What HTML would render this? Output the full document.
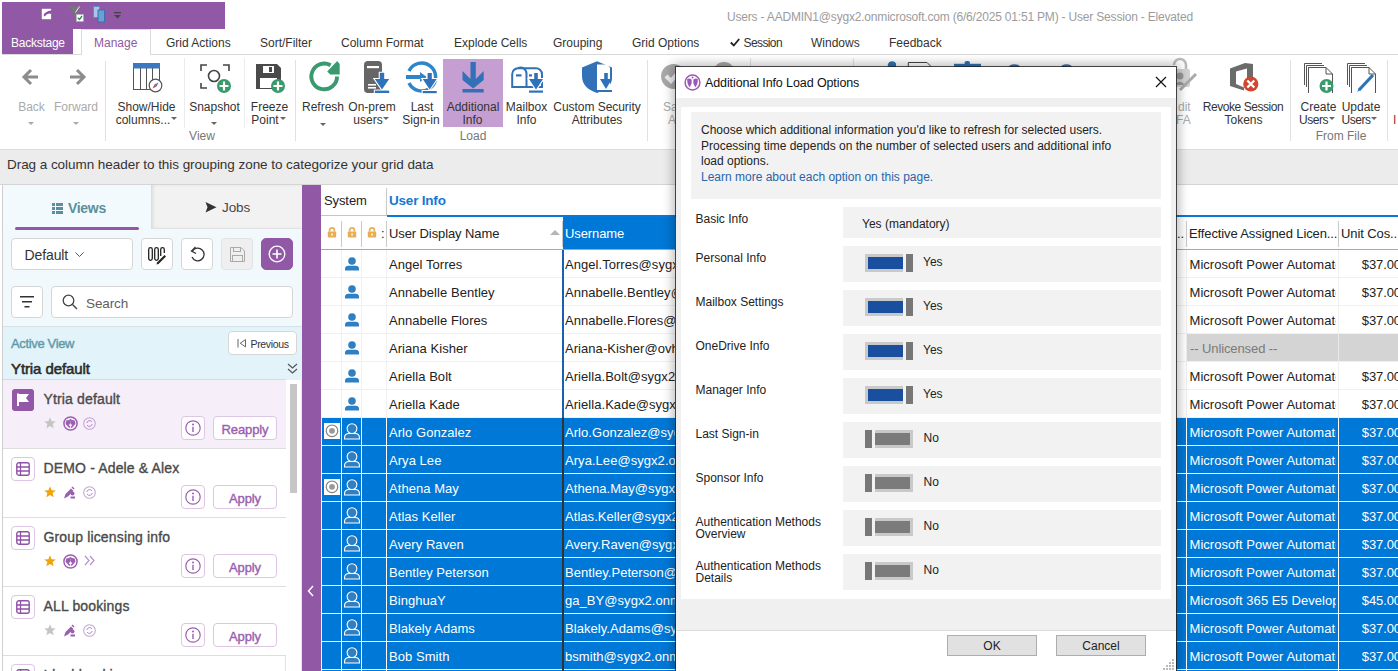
<!DOCTYPE html>
<html><head><meta charset="utf-8">
<style>
*{box-sizing:border-box;margin:0;padding:0}
html,body{width:1398px;height:671px;overflow:hidden;background:#fff;font-family:"Liberation Sans",sans-serif;color:#222;position:relative}
.a{position:absolute}
.t{position:absolute;white-space:nowrap;line-height:1}
svg{position:absolute;overflow:visible}
.clip{position:absolute;overflow:hidden}
</style></head><body>

<div class="a" style="left:2px;top:2px;width:223px;height:27px;background:#9158a5;"></div>
<svg style="left:38px;top:5px" width="18" height="18" viewBox="38 5 18 18"><rect x="41.8" y="8.8" width="9.3" height="10.4" fill="#fff"/><path d="M43.5 15 Q46 10.5 52 10.5 L51 14 Q48 12.5 44.5 16.5 Z" fill="#8a4fa6"/></svg>
<svg style="left:65px;top:4px" width="22" height="20" viewBox="65 4 22 20"><path d="M68 6.3 H81 L76.5 12 V19 L74 16 V12 Z" fill="#777"/><path d="M75.5 12.5 L79.5 6.5" stroke="#eee" stroke-width="1"/><rect x="76.5" y="14.5" width="6.8" height="6.8" fill="#fff" stroke="#bbb" stroke-width="0.6"/><path d="M77.8 17.8 L79.5 19.5 L82 16" stroke="#2a8a57" stroke-width="1.3" fill="none"/></svg>
<svg style="left:93px;top:6px;" width="14" height="17" viewBox="0 0 14 17"><rect x="0.5" y="0.5" width="6" height="11" fill="#a9c6e8" stroke="#5b8ec7" stroke-width="1"/><rect x="5" y="4" width="6.5" height="12" fill="#6b9fd6" stroke="#3a6fb0" stroke-width="1"/></svg>
<svg style="left:113px;top:11px;" width="10" height="8" viewBox="0 0 10 8"><rect x="1" y="1" width="7" height="1.3" fill="#444"/><path d="M1 4 H8 L4.5 7.5 Z" fill="#444"/></svg>
<div class="t" style="left:727px;top:11.14px;font-size:12px;color:#9c9c9c;letter-spacing:-0.19px;">Users - AADMIN1@sygx2.onmicrosoft.com (6/6/2025 01:51 PM) - User Session - Elevated</div>
<div class="a" style="left:2px;top:29px;width:71px;height:25px;background:#9158a5;"></div>
<div class="t" style="left:11px;top:36.94px;font-size:12px;color:#fff;letter-spacing:-0.25px;">Backstage</div>
<div class="a" style="left:2px;top:54px;width:1396px;height:1px;background:#dadada;"></div>
<div class="a" style="left:81px;top:29px;width:70px;height:26px;background:#fff;border:1px solid #dadada;border-bottom:none"></div>
<div class="t" style="left:94px;top:36.94px;font-size:12px;color:#9158a5;">Manage</div>
<div class="t" style="left:166px;top:36.94px;font-size:12px;color:#333;">Grid Actions</div>
<div class="t" style="left:260px;top:36.94px;font-size:12px;color:#333;">Sort/Filter</div>
<div class="t" style="left:341px;top:36.94px;font-size:12px;color:#333;">Column Format</div>
<div class="t" style="left:454px;top:36.94px;font-size:12px;color:#333;">Explode Cells</div>
<div class="t" style="left:553px;top:36.94px;font-size:12px;color:#333;">Grouping</div>
<div class="t" style="left:632px;top:36.94px;font-size:12px;color:#333;">Grid Options</div>
<div class="t" style="left:811px;top:36.94px;font-size:12px;color:#333;">Windows</div>
<div class="t" style="left:889px;top:36.94px;font-size:12px;color:#333;">Feedback</div>
<svg style="left:730px;top:38px;" width="10" height="9" viewBox="0 0 10 9"><path d="M0.8 4.5 L3.8 7.5 L9.2 1" stroke="#222" stroke-width="1.8" fill="none"/></svg>
<div class="t" style="left:743.5px;top:36.94px;font-size:12px;color:#333;letter-spacing:-0.6px;">Session</div>
<div class="a" style="left:105px;top:61px;width:1px;height:80px;background:#e1e1e1;"></div>
<div class="a" style="left:184px;top:58px;width:1px;height:70px;background:#ececec;"></div>
<div class="a" style="left:244px;top:58px;width:1px;height:70px;background:#ececec;"></div>
<div class="a" style="left:295px;top:60px;width:1px;height:81px;background:#e1e1e1;"></div>
<div class="a" style="left:647px;top:60px;width:1px;height:81px;background:#e1e1e1;"></div>
<div class="a" style="left:750px;top:58px;width:1px;height:8px;background:#e1e1e1;"></div>
<div class="a" style="left:853px;top:58px;width:1px;height:8px;background:#e1e1e1;"></div>
<div class="a" style="left:1290px;top:60px;width:1px;height:81px;background:#e1e1e1;"></div>
<div class="a" style="left:1387px;top:60px;width:1px;height:81px;background:#e1e1e1;"></div>
<svg style="left:15px;top:60px" width="80" height="35" viewBox="15 60 80 35"><path d="M31 70 L24 77 L31 84 M23.5 77 H38" stroke="#8c8c8c" stroke-width="3" fill="none" stroke-linecap="butt"/></svg>
<svg style="left:60px;top:60px" width="40" height="35" viewBox="60 60 40 35"><path d="M77 70 L84 77 L77 84 M84.5 77 H70" stroke="#8c8c8c" stroke-width="3" fill="none"/></svg>
<div class="t" style="left:-268.5px;width:600px;text-align:center;top:101.04px;font-size:12px;color:#aaa;">Back</div>
<div class="t" style="left:-224px;width:600px;text-align:center;top:101.04px;font-size:12px;color:#aaa;">Forward</div>
<svg style="left:28px;top:122px;" width="6" height="3" viewBox="0 0 6 3"><path d="M0 0 H6 L3 3 Z" fill="#aaa"/></svg>
<svg style="left:73px;top:122px;" width="6" height="3" viewBox="0 0 6 3"><path d="M0 0 H6 L3 3 Z" fill="#aaa"/></svg>
<svg style="left:133px;top:63px;" width="30" height="30" viewBox="0 0 30 30"><rect x="0.5" y="0.5" width="26" height="26" fill="#fff" stroke="#555" stroke-width="1"/><rect x="0" y="0" width="27" height="5.5" fill="#3a78c2"/><path d="M7.5 5 V27 M13.5 5 V27 M19.5 5 V27" stroke="#555" stroke-width="1"/><circle cx="22.5" cy="22.5" r="6.3" fill="#fff" stroke="#555" stroke-width="1.2"/><path d="M25.5 19.5 L21.5 21.5 L23.5 23.5 Z" fill="#3a78c2"/><path d="M19.5 25.5 L21.5 21.5 L23.5 23.5 Z" fill="#d9432f"/></svg>
<div class="t" style="left:-153.5px;width:600px;text-align:center;top:101.04px;font-size:12px;color:#333;">Show/Hide</div>
<div class="t" style="left:-157px;width:600px;text-align:center;top:113.54px;font-size:12px;color:#333;">columns...</div>
<svg style="left:171px;top:117px;" width="6" height="3" viewBox="0 0 6 3"><path d="M0 0 H6 L3 3 Z" fill="#666"/></svg>
<svg style="left:200px;top:64px;" width="32" height="30" viewBox="0 0 32 30"><path d="M1 7 V1 H7 M23 1 H29 V7 M1 19 V24 H7" stroke="#444" stroke-width="1.6" fill="none"/><circle cx="14" cy="12" r="5.5" stroke="#444" stroke-width="1.6" fill="none"/><circle cx="24" cy="22" r="7" fill="#3a9a6e"/><path d="M24 17.5 V26.5 M19.5 22 H28.5" stroke="#fff" stroke-width="2.2"/></svg>
<div class="t" style="left:-85.5px;width:600px;text-align:center;top:101.04px;font-size:12px;color:#333;">Snapshot</div>
<svg style="left:211px;top:122px;" width="6" height="3" viewBox="0 0 6 3"><path d="M0 0 H6 L3 3 Z" fill="#666"/></svg>
<svg style="left:256px;top:64px;" width="30" height="30" viewBox="0 0 30 30"><path d="M0 0 H21 L25 4 V25 H0 Z" fill="#4a4a4a"/><rect x="4" y="14" width="17" height="10" fill="#fff"/><rect x="7" y="2" width="11" height="7" fill="#fff"/><rect x="13" y="3" width="3" height="5" fill="#4a4a4a"/><circle cx="22" cy="22" r="7" fill="#3a9a6e"/><path d="M22 17.5 V26.5 M17.5 22 H26.5" stroke="#fff" stroke-width="2.2"/></svg>
<div class="t" style="left:-30.5px;width:600px;text-align:center;top:101.04px;font-size:12px;color:#333;">Freeze</div>
<div class="t" style="left:-35px;width:600px;text-align:center;top:113.54px;font-size:12px;color:#333;">Point</div>
<svg style="left:280px;top:117px;" width="6" height="3" viewBox="0 0 6 3"><path d="M0 0 H6 L3 3 Z" fill="#666"/></svg>
<svg style="left:305px;top:58px" width="40" height="38" viewBox="305 58 40 38"><path d="M337.05 76.4 A12.85 12.85 0 1 1 330.6 65.3" stroke="#3a9a6e" stroke-width="3.9" fill="none"/><path d="M337.2 61 L339.7 64 V74.6 H330.2 L327.2 71.4 Z" fill="#3a9a6e"/></svg>
<div class="t" style="left:23px;width:600px;text-align:center;top:101.04px;font-size:12px;color:#333;">Refresh</div>
<svg style="left:320px;top:123px;" width="6" height="3" viewBox="0 0 6 3"><path d="M0 0 H6 L3 3 Z" fill="#666"/></svg>
<svg style="left:360px;top:58px" width="32" height="38" viewBox="360 58 32 38"><rect x="364" y="61" width="18" height="32" rx="4" fill="#666"/><rect x="367" y="66" width="12" height="2.2" fill="#fff"/><rect x="368" y="84" width="8" height="1.6" fill="#fff"/><rect x="368" y="87" width="8" height="1.6" fill="#fff"/><path d="M379.8 72.8 H384.2 V79 H389.2 L382 89.6 L374.8 79 H379.8 Z" fill="none" stroke="#fff" stroke-width="2.2"/><rect x="373.8" y="89.6" width="16.4" height="3.4" fill="#fff"/><path d="M379.8 72.8 H384.2 V79 H389.2 L382 89.6 L374.8 79 H379.8 Z" fill="#2f72b9"/><rect x="374.8" y="90.6" width="14.4" height="2.4" fill="#2f72b9"/></svg>
<div class="t" style="left:72px;width:600px;text-align:center;top:101.04px;font-size:12px;color:#333;">On-prem</div>
<div class="t" style="left:68px;width:600px;text-align:center;top:113.54px;font-size:12px;color:#333;">users</div>
<svg style="left:383px;top:117px;" width="6" height="3" viewBox="0 0 6 3"><path d="M0 0 H6 L3 3 Z" fill="#666"/></svg>
<svg style="left:402px;top:58px" width="40" height="38" viewBox="402 58 40 38"><path d="M409 71 A14 14 0 1 1 409 83" stroke="#2e86c8" stroke-width="3.5" fill="none"/><path d="M406 75 H420 V72 L426.8 77 L420 82 V79 H406 Z" fill="#2e86c8"/><path d="M427.59999999999997 73 H431.8 V79 H436.7 L429.7 89.6 L422.7 79 H427.59999999999997 Z" fill="none" stroke="#fff" stroke-width="2.2"/><rect x="421.7" y="90" width="16" height="3.2" fill="#fff"/><path d="M427.59999999999997 73 H431.8 V79 H436.7 L429.7 89.6 L422.7 79 H427.59999999999997 Z" fill="#2f72b9"/><rect x="422.7" y="91" width="14" height="2.2" fill="#2f72b9"/></svg>
<div class="t" style="left:122px;width:600px;text-align:center;top:101.04px;font-size:12px;color:#333;">Last</div>
<div class="t" style="left:121px;width:600px;text-align:center;top:113.54px;font-size:12px;color:#333;">Sign-in</div>
<div class="a" style="left:443px;top:59px;width:60px;height:68px;background:#c59fd2;"></div>
<svg style="left:458px;top:60px" width="30" height="35" viewBox="458 60 30 35"><path d="M470.5 62 H475.8 V79 L483.7 71 V80 L473.2 88.5 L462.5 80 V71 L470.5 79 Z" fill="#3271b8"/><rect x="462.5" y="89" width="21.2" height="3.5" fill="#3271b8"/></svg>
<div class="t" style="left:173px;width:600px;text-align:center;top:101.04px;font-size:12px;color:#333;">Additional</div>
<div class="t" style="left:172.5px;width:600px;text-align:center;top:113.54px;font-size:12px;color:#333;">Info</div>
<svg style="left:508px;top:62px" width="40" height="34" viewBox="508 62 40 34"><path d="M518 68.2 H536 A6 6 0 0 1 542 74.2 V87 H512.2 V74.2 A6 6 0 0 1 518 68.2 Z" fill="#fff" stroke="#3271b8" stroke-width="2"/><path d="M518 68.2 A6 6 0 0 1 526.5 74.2 V87" stroke="#3271b8" stroke-width="2" fill="none"/><rect x="516" y="74.3" width="5.5" height="2.2" fill="#3271b8"/><rect x="529" y="74.3" width="3" height="2.2" fill="#3271b8"/><path d="M534.2 73 H537.8 V79 H543 L536 89.5 L529 79 H534.2 Z" fill="none" stroke="#fff" stroke-width="2.2"/><rect x="528" y="89.5" width="16" height="3.2" fill="#fff"/><path d="M534.2 73 H537.8 V79 H543 L536 89.5 L529 79 H534.2 Z" fill="#2f72b9"/><rect x="529" y="90.5" width="14" height="2.2" fill="#2f72b9"/></svg>
<div class="t" style="left:226.5px;width:600px;text-align:center;top:101.04px;font-size:12px;color:#333;">Mailbox</div>
<div class="t" style="left:226.5px;width:600px;text-align:center;top:113.54px;font-size:12px;color:#333;">Info</div>
<svg style="left:578px;top:58px" width="40" height="38" viewBox="578 58 40 38"><path d="M597 61.2 L612 67.5 V78 C612 85 606 90 597 93 C588 90 582 85 582 76 V67.5 Z" fill="#3271b8"/><path d="M597 64.5 H607 L610 67.5 V90 H597 Z" fill="#fff"/><path d="M604.2 73 H607.8 V79 H612 L606 89 L600 79 H604.2 Z" fill="#2f72b9"/><rect x="600" y="90" width="12" height="2" fill="#2f72b9"/></svg>
<div class="t" style="left:297px;width:600px;text-align:center;top:101.04px;font-size:12px;color:#333;letter-spacing:-0.05px;">Custom Security</div>
<div class="t" style="left:297px;width:600px;text-align:center;top:113.54px;font-size:12px;color:#333;">Attributes</div>
<svg style="left:655px;top:58px" width="40" height="40" viewBox="655 58 40 40"><circle cx="673.6" cy="76.4" r="12.5" fill="#a8a8a8"/><path d="M666 76 L671 81 L680 71" stroke="#eee" stroke-width="4.2" fill="none"/></svg>
<div class="t" style="left:663px;top:101.04px;font-size:12px;color:#aaa;">Sa</div>
<div class="t" style="left:668px;top:113.54px;font-size:12px;color:#aaa;">A</div>
<svg style="left:712px;top:61px;" width="24" height="10" viewBox="0 0 24 10"><circle cx="12" cy="12" r="11" fill="#a8a8a8"/></svg>
<svg style="left:880px;top:58px" width="200" height="9" viewBox="880 58 200 9"><path d="M888 67 A4 4 0 0 1 896 64 V67 Z" fill="#2e73b8"/><circle cx="893" cy="65" r="3" fill="#2e73b8"/><path d="M908.3 67 V62.5 H927 L931 66.5" stroke="#444" stroke-width="1" fill="none"/><rect x="954" y="63.8" width="27" height="4" fill="#2e73b8"/><rect x="964.5" y="61" width="5.5" height="4" rx="2" fill="#2e73b8"/><ellipse cx="1014.3" cy="68" rx="6" ry="3.8" fill="#2e73b8"/><ellipse cx="1066.5" cy="68" rx="6" ry="3.8" fill="#2e73b8"/></svg>
<svg style="left:1166px;top:61px;" width="32" height="30" viewBox="0 0 32 30"><path d="M8 4 A6 6 0 0 1 20 4 V8" stroke="#bbb" stroke-width="2.5" fill="none"/><rect x="4" y="8" width="20" height="18" rx="2" fill="#d2d2d2"/><circle cx="14" cy="15" r="3.5" fill="#999"/><path d="M9 24 Q14 17 19 24" fill="#999"/><path d="M14 29 L30 13" stroke="#aaa" stroke-width="3"/></svg>
<div class="t" style="left:1178px;top:101.04px;font-size:12px;color:#aaa;">dit</div>
<div class="t" style="left:1176px;top:113.54px;font-size:12px;color:#aaa;">FA</div>
<svg style="left:1225px;top:58px" width="36" height="36" viewBox="1225 58 36 36"><path d="M1230 68.5 L1245 63 L1253 64 V82 H1247 V68.5 L1236 71.5 V84 L1244 87.5 V90.5 L1230 86 Z" fill="#6b6b6b"/><circle cx="1250.8" cy="84" r="7.6" fill="#d2452f"/><path d="M1247.3 80.5 L1254.3 87.5 M1254.3 80.5 L1247.3 87.5" stroke="#fff" stroke-width="2.3"/></svg>
<div class="t" style="left:943px;width:600px;text-align:center;top:101.04px;font-size:12px;color:#333;letter-spacing:-0.45px;">Revoke Session</div>
<div class="t" style="left:943.5px;width:600px;text-align:center;top:113.54px;font-size:12px;color:#333;">Tokens</div>
<svg style="left:1304px;top:63px;" width="30" height="31" viewBox="0 0 30 31"><path d="M0.5 22 V0.5 H18" stroke="#555" stroke-width="1" fill="none"/><path d="M2.5 24 V2.5 H20" stroke="#555" stroke-width="1" fill="none"/><path d="M4.5 26 V4.5 H22 L28.5 11 V30" stroke="#555" stroke-width="1" fill="#fff"/><path d="M4.5 4.5 V30 M22 4.5 V11 H28.5" stroke="#555" stroke-width="1" fill="none"/><circle cx="22.5" cy="23" r="7" fill="#3a9a6e"/><path d="M22.5 18.5 V27.5 M18 23 H27" stroke="#fff" stroke-width="2.2"/></svg>
<svg style="left:1347px;top:63px;" width="30" height="31" viewBox="0 0 30 31"><path d="M0.5 22 V0.5 H18" stroke="#555" stroke-width="1" fill="none"/><path d="M2.5 24 V2.5 H20" stroke="#555" stroke-width="1" fill="none"/><path d="M4.5 26 V4.5 H22 L28.5 11 V30" stroke="#555" stroke-width="1" fill="#fff"/><path d="M4.5 4.5 V30 M22 4.5 V11 H28.5" stroke="#555" stroke-width="1" fill="none"/><path d="M12 27 L26 12" stroke="#2e73b8" stroke-width="3.2"/><path d="M10 29 L12 25.5 L13.5 27 Z" fill="#2e73b8"/></svg>
<div class="t" style="left:1018.5px;width:600px;text-align:center;top:101.04px;font-size:12px;color:#333;">Create</div>
<div class="t" style="left:1013.5px;width:600px;text-align:center;top:113.54px;font-size:12px;color:#333;letter-spacing:-0.5px;">Users</div>
<svg style="left:1329px;top:117px;" width="6" height="3" viewBox="0 0 6 3"><path d="M0 0 H6 L3 3 Z" fill="#666"/></svg>
<div class="t" style="left:1061px;width:600px;text-align:center;top:101.04px;font-size:12px;color:#333;">Update</div>
<div class="t" style="left:1056px;width:600px;text-align:center;top:113.54px;font-size:12px;color:#333;letter-spacing:-0.5px;">Users</div>
<svg style="left:1371px;top:117px;" width="6" height="3" viewBox="0 0 6 3"><path d="M0 0 H6 L3 3 Z" fill="#666"/></svg>
<div class="t" style="left:1393px;top:113.54px;font-size:12px;color:#8b3a2e;">I</div>
<div class="t" style="left:-98px;width:600px;text-align:center;top:130.04px;font-size:12px;color:#777;">View</div>
<div class="t" style="left:173px;width:600px;text-align:center;top:130.04px;font-size:12px;color:#777;">Load</div>
<div class="t" style="left:1041px;width:600px;text-align:center;top:130.04px;font-size:12px;color:#777;">From File</div>
<div class="a" style="left:0px;top:149px;width:1398px;height:36px;background:#ececec;border-top:1px solid #dcdcdc;border-bottom:1px solid #d4d4d4"></div>
<div class="t" style="left:7px;top:157.67px;font-size:13.5px;color:#333;letter-spacing:-0.05px;">Drag a column header to this grouping zone to categorize your grid data</div>
<div class="a" style="left:2px;top:185px;width:300px;height:486px;background:#f1f9fc;border-left:1px solid #cfcfcf"></div>
<div class="a" style="left:151px;top:185px;width:151px;height:44px;background:#f2f2f2;box-shadow:inset 3px 0 4px -2px rgba(0,0,0,0.15);border-bottom:1px solid #e2e2e2"></div>
<div class="a" style="left:3px;top:185px;width:148px;height:44px;background:#f3fafd;border-radius:6px 6px 0 0"></div>
<div class="a" style="left:15px;top:227px;width:124px;height:3px;background:#9158a5;border-radius:2px"></div>
<svg style="left:52px;top:203px;" width="11" height="11" viewBox="0 0 11 11"><rect x="0" y="0" width="3" height="3" fill="#5b8f9b"/><rect x="4" y="0" width="7" height="3" fill="#5b8f9b"/><rect x="0" y="4" width="3" height="3" fill="#5b8f9b"/><rect x="4" y="4" width="7" height="3" fill="#5b8f9b"/><rect x="0" y="8" width="3" height="3" fill="#5b8f9b"/><rect x="4" y="8" width="7" height="3" fill="#5b8f9b"/></svg>
<div class="t" style="left:68px;top:201.05px;font-size:14px;color:#5b8f9b;font-weight:bold;letter-spacing:-0.3px;">Views</div>
<svg style="left:205px;top:202px;" width="12" height="11" viewBox="0 0 12 11"><path d="M0.5 0 L11.5 5.2 L0.5 10.5 L2.5 5.2 Z" fill="#333"/></svg>
<div class="t" style="left:222px;top:201.17px;font-size:13.5px;color:#484848;letter-spacing:-0.1px;">Jobs</div>
<div class="a" style="left:11px;top:238px;width:122px;height:32px;background:#fff;border:1px solid #d6d6d6;border-radius:4px"></div>
<div class="t" style="left:24.5px;top:247.75px;font-size:14px;color:#333;letter-spacing:-0.1px;">Default</div>
<svg style="left:75px;top:252px;" width="9" height="5" viewBox="0 0 9 5"><path d="M0.5 0.5 L4.5 4.5 L8.5 0.5" stroke="#555" stroke-width="1" fill="none"/></svg>
<div class="a" style="left:141px;top:238px;width:32px;height:32px;background:#fff;border:1px solid #d6d6d6;border-radius:4px"></div>
<svg style="left:148px;top:247px;" width="18" height="16" viewBox="0 0 18 16"><rect x="0.7" y="0.7" width="3.6" height="12.6" rx="1.8" stroke="#222" stroke-width="1.3" fill="none"/><rect x="6.7" y="0.7" width="3.6" height="12.6" rx="1.8" stroke="#222" stroke-width="1.3" fill="none"/><path d="M12.7 9 V2.5 A1.8 1.8 0 0 1 16.3 2.5 V6" stroke="#222" stroke-width="1.3" fill="none"/><path d="M9 15.5 L16.5 8 L18 9.5 L10.5 17 L8.5 17.5 Z" fill="#222"/></svg>
<div class="a" style="left:181px;top:238px;width:32px;height:32px;background:#fff;border:1px solid #d6d6d6;border-radius:4px"></div>
<svg style="left:189px;top:246px;" width="16" height="16" viewBox="0 0 16 16"><path d="M3.5 5 A6.3 6.3 0 1 1 3 11" stroke="#333" stroke-width="1.3" fill="none"/><path d="M6.5 1 L2.5 5 L7 7.5" stroke="#333" stroke-width="1.3" fill="none"/></svg>
<div class="a" style="left:221px;top:238px;width:32px;height:32px;background:#efefef;border:1px solid #e2e2e2;border-radius:4px"></div>
<svg style="left:230px;top:247px;" width="15" height="15" viewBox="0 0 15 15"><path d="M0.5 0.5 H11 L14.5 4 V14.5 H0.5 Z" stroke="#aaa" stroke-width="1" fill="none"/><rect x="3.5" y="0.5" width="7" height="4" stroke="#aaa" stroke-width="1" fill="none"/><rect x="2.5" y="8.5" width="10" height="6" stroke="#aaa" stroke-width="1" fill="none"/></svg>
<div class="a" style="left:261px;top:238px;width:32px;height:32px;background:#9158a5;border:1px solid #9158a5;border-radius:5px"></div>
<svg style="left:268px;top:245px;" width="18" height="18" viewBox="0 0 18 18"><circle cx="9" cy="9" r="7.8" stroke="#fff" stroke-width="1.3" fill="none"/><path d="M9 4.5 V13.5 M4.5 9 H13.5" stroke="#fff" stroke-width="1.6"/></svg>
<div class="a" style="left:11px;top:286px;width:32px;height:32px;background:#fff;border:1px solid #d6d6d6;border-radius:4px"></div>
<svg style="left:20px;top:296px;" width="14" height="12" viewBox="0 0 14 12"><path d="M0 0.75 H14 M2 5.75 H12 M4.5 10.75 H9.5" stroke="#333" stroke-width="1.3"/></svg>
<div class="a" style="left:51px;top:286px;width:242px;height:32px;background:#fff;border:1px solid #d6d6d6;border-radius:4px"></div>
<svg style="left:62px;top:294px;" width="16" height="16" viewBox="0 0 16 16"><circle cx="6.5" cy="6.5" r="5.3" stroke="#444" stroke-width="1.3" fill="none"/><path d="M10.5 10.5 L15 15" stroke="#444" stroke-width="1.4"/></svg>
<div class="t" style="left:86px;top:297.17px;font-size:13.5px;color:#606060;letter-spacing:-0.1px;">Search</div>
<div class="a" style="left:3px;top:326px;width:299px;height:54px;background:#e2f4fa;border-top:1px solid #d5e3e8"></div>
<div class="t" style="left:11px;top:337.30px;font-size:13px;color:#5f9aa8;letter-spacing:-0.35px;-webkit-text-stroke:0.4px #5f9aa8">Active View</div>
<div class="a" style="left:228px;top:331px;width:69px;height:24px;background:#fff;border:1px solid #d6d6d6;border-radius:4px"></div>
<svg style="left:237px;top:339px;" width="10" height="9" viewBox="0 0 10 9"><path d="M1 0 V8.5" stroke="#666" stroke-width="1"/><path d="M8.5 0.6 L3.2 4.25 L8.5 7.9 Z" stroke="#666" stroke-width="1" fill="none"/></svg>
<div class="t" style="left:250.5px;top:338.71px;font-size:10.5px;color:#333;letter-spacing:-0.35px;">Previous</div>
<svg style="left:287px;top:363px;" width="11" height="11" viewBox="0 0 11 11"><path d="M1 1 L5.5 5 L10 1 M1 6 L5.5 10 L10 6" stroke="#555" stroke-width="1.2" fill="none"/></svg>
<div class="t" style="left:11px;top:361.10px;font-size:15px;color:#2a2a2a;letter-spacing:-0.1px;-webkit-text-stroke:0.55px #2a2a2a">Ytria default</div>
<div class="a" style="left:3px;top:379px;width:283px;height:1px;background:#d9d9d9;"></div>
<div class="a" style="left:3px;top:380px;width:283px;height:291px;background:#fff;"></div>
<div class="a" style="left:286px;top:380px;width:16px;height:291px;background:#fff;"></div>
<div class="a" style="left:290px;top:384px;width:7px;height:109px;background:#c6c6c6;"></div>
<div class="a" style="left:285px;top:380px;width:1px;height:291px;background:#e2e2e2;"></div>
<div class="a" style="left:301px;top:380px;width:1px;height:291px;background:#e6e6e6;"></div>
<div class="a" style="left:3px;top:380px;width:283px;height:69px;background:#f6eef8;border-bottom:1px solid #dedede"></div>
<div class="a" style="left:12px;top:389px;width:22px;height:22px;background:#9257a7;border-radius:3px"></div>
<svg style="left:17px;top:393px;" width="13" height="14" viewBox="0 0 13 14"><path d="M1 0.5 V13" stroke="#fff" stroke-width="2"/><path d="M1.5 1 H12 L9 5 L12 9 H1.5 Z" fill="#fff"/></svg>
<div class="t" style="left:43.5px;top:391.55px;font-size:14px;color:#4a4a4a;letter-spacing:0.15px;-webkit-text-stroke:0.35px #4a4a4a">Ytria default</div>
<svg style="left:44px;top:417px;" width="12" height="12" viewBox="0 0 12 12"><path d="M6 0.3 L7.6 4.2 L11.8 4.4 L8.6 7.1 L9.7 11.3 L6 9 L2.3 11.3 L3.4 7.1 L0.2 4.4 L4.4 4.2 Z" fill="#c4c4c4"/></svg>
<svg style="left:63px;top:416px;" width="15" height="15" viewBox="0 0 15 15"><circle cx="7.5" cy="7.5" r="6.6" stroke="#9b5fb0" stroke-width="1.5" fill="none"/><circle cx="5.2" cy="6.5" r="2.4" fill="#9b5fb0"/><circle cx="9.8" cy="6.5" r="2.4" fill="#9b5fb0"/><path d="M3 7 L6.8 11.5 M12 7 L8.2 11.5" stroke="#9b5fb0" stroke-width="1.6"/><circle cx="7.5" cy="4.2" r="1.2" fill="#9b5fb0"/></svg>
<svg style="left:83px;top:417px;" width="13" height="13" viewBox="0 0 13 13"><circle cx="6.5" cy="6.5" r="5.8" stroke="#c8a6d6" stroke-width="1.1" fill="none"/><path d="M3.8 6 A2.8 2.8 0 0 1 9 5" stroke="#b48cc6" stroke-width="1" fill="none"/><path d="M9.2 7 A2.8 2.8 0 0 1 4 8" stroke="#b48cc6" stroke-width="1" fill="none"/></svg>
<div class="a" style="left:181px;top:416px;width:24px;height:24px;background:#fff;border:1px solid #dcc6e4;border-radius:4px"></div>
<svg style="left:185px;top:420px;" width="16" height="16" viewBox="0 0 16 16"><circle cx="8" cy="8" r="7.2" stroke="#9b5fb0" stroke-width="1.2" fill="none"/><circle cx="8" cy="4.6" r="1" fill="#9b5fb0"/><path d="M8 6.8 V12" stroke="#9b5fb0" stroke-width="1.4"/></svg>
<div class="a" style="left:213px;top:416px;width:64px;height:24px;background:#fff;border:1px solid #dcc6e4;border-radius:4px"></div>
<div class="t" style="left:-55px;width:600px;text-align:center;top:422.60px;font-size:13px;color:#9b5fb0;letter-spacing:-0.1px;-webkit-text-stroke:0.4px #9b5fb0">Reapply</div>
<div class="a" style="left:3px;top:449px;width:283px;height:69px;background:#fff;border-bottom:1px solid #dedede"></div>
<div class="a" style="left:11px;top:457px;width:24px;height:24px;background:#fff;border:1px solid #dcc6e4;border-radius:4px"></div>
<svg style="left:16px;top:462px;" width="14" height="14" viewBox="0 0 14 14"><rect x="0.8" y="0.8" width="12.4" height="12.4" rx="2" stroke="#9050a8" stroke-width="1.4" fill="none"/><path d="M0.8 5 H13.2 M0.8 9 H13.2 M4.5 0.8 V13.2" stroke="#9050a8" stroke-width="1.3"/></svg>
<div class="t" style="left:43.5px;top:460.55px;font-size:14px;color:#4a4a4a;letter-spacing:0.15px;-webkit-text-stroke:0.35px #4a4a4a">DEMO - Adele &amp; Alex</div>
<svg style="left:44px;top:486px;" width="12" height="12" viewBox="0 0 12 12"><path d="M6 0.3 L7.6 4.2 L11.8 4.4 L8.6 7.1 L9.7 11.3 L6 9 L2.3 11.3 L3.4 7.1 L0.2 4.4 L4.4 4.2 Z" fill="#f0a30a"/></svg>
<svg style="left:63px;top:486px;" width="13" height="13" viewBox="0 0 13 13"><path d="M1 12.5 L2.5 8 L8 2.5 L10.5 5 L5 10.5 Z" fill="#9b5fb0"/><circle cx="9.5" cy="7.5" r="2" fill="#9b5fb0"/><path d="M7.5 11.5 H12" stroke="#9b5fb0" stroke-width="2"/><path d="M9 1 L11 3" stroke="#9b5fb0" stroke-width="1.5"/></svg>
<svg style="left:83px;top:486px;" width="13" height="13" viewBox="0 0 13 13"><circle cx="6.5" cy="6.5" r="5.8" stroke="#c8a6d6" stroke-width="1.1" fill="none"/><path d="M3.8 6 A2.8 2.8 0 0 1 9 5" stroke="#b48cc6" stroke-width="1" fill="none"/><path d="M9.2 7 A2.8 2.8 0 0 1 4 8" stroke="#b48cc6" stroke-width="1" fill="none"/></svg>
<div class="a" style="left:181px;top:485px;width:24px;height:24px;background:#fff;border:1px solid #dcc6e4;border-radius:4px"></div>
<svg style="left:185px;top:489px;" width="16" height="16" viewBox="0 0 16 16"><circle cx="8" cy="8" r="7.2" stroke="#9b5fb0" stroke-width="1.2" fill="none"/><circle cx="8" cy="4.6" r="1" fill="#9b5fb0"/><path d="M8 6.8 V12" stroke="#9b5fb0" stroke-width="1.4"/></svg>
<div class="a" style="left:213px;top:485px;width:64px;height:24px;background:#fff;border:1px solid #dcc6e4;border-radius:4px"></div>
<div class="t" style="left:-55px;width:600px;text-align:center;top:491.60px;font-size:13px;color:#9b5fb0;letter-spacing:-0.1px;-webkit-text-stroke:0.4px #9b5fb0">Apply</div>
<div class="a" style="left:3px;top:518px;width:283px;height:69px;background:#fff;border-bottom:1px solid #dedede"></div>
<div class="a" style="left:11px;top:526px;width:24px;height:24px;background:#fff;border:1px solid #dcc6e4;border-radius:4px"></div>
<svg style="left:16px;top:531px;" width="14" height="14" viewBox="0 0 14 14"><rect x="0.8" y="0.8" width="12.4" height="12.4" rx="2" stroke="#9050a8" stroke-width="1.4" fill="none"/><path d="M0.8 5 H13.2 M0.8 9 H13.2 M4.5 0.8 V13.2" stroke="#9050a8" stroke-width="1.3"/></svg>
<div class="t" style="left:43.5px;top:529.55px;font-size:14px;color:#4a4a4a;letter-spacing:0.15px;-webkit-text-stroke:0.35px #4a4a4a">Group licensing info</div>
<svg style="left:44px;top:555px;" width="12" height="12" viewBox="0 0 12 12"><path d="M6 0.3 L7.6 4.2 L11.8 4.4 L8.6 7.1 L9.7 11.3 L6 9 L2.3 11.3 L3.4 7.1 L0.2 4.4 L4.4 4.2 Z" fill="#f0a30a"/></svg>
<svg style="left:63px;top:554px;" width="15" height="15" viewBox="0 0 15 15"><circle cx="7.5" cy="7.5" r="6.6" stroke="#9b5fb0" stroke-width="1.5" fill="none"/><circle cx="5.2" cy="6.5" r="2.4" fill="#9b5fb0"/><circle cx="9.8" cy="6.5" r="2.4" fill="#9b5fb0"/><path d="M3 7 L6.8 11.5 M12 7 L8.2 11.5" stroke="#9b5fb0" stroke-width="1.6"/><circle cx="7.5" cy="4.2" r="1.2" fill="#9b5fb0"/></svg>
<svg style="left:84px;top:555px;" width="13" height="11" viewBox="0 0 13 11"><path d="M1 1 L5 5.5 L1 10 M6 1 L10 5.5 L6 10" stroke="#b890c8" stroke-width="1.2" fill="none"/></svg>
<div class="a" style="left:181px;top:554px;width:24px;height:24px;background:#fff;border:1px solid #dcc6e4;border-radius:4px"></div>
<svg style="left:185px;top:558px;" width="16" height="16" viewBox="0 0 16 16"><circle cx="8" cy="8" r="7.2" stroke="#9b5fb0" stroke-width="1.2" fill="none"/><circle cx="8" cy="4.6" r="1" fill="#9b5fb0"/><path d="M8 6.8 V12" stroke="#9b5fb0" stroke-width="1.4"/></svg>
<div class="a" style="left:213px;top:554px;width:64px;height:24px;background:#fff;border:1px solid #dcc6e4;border-radius:4px"></div>
<div class="t" style="left:-55px;width:600px;text-align:center;top:560.60px;font-size:13px;color:#9b5fb0;letter-spacing:-0.1px;-webkit-text-stroke:0.4px #9b5fb0">Apply</div>
<div class="a" style="left:3px;top:587px;width:283px;height:69px;background:#fff;border-bottom:1px solid #dedede"></div>
<div class="a" style="left:11px;top:595px;width:24px;height:24px;background:#fff;border:1px solid #dcc6e4;border-radius:4px"></div>
<svg style="left:16px;top:600px;" width="14" height="14" viewBox="0 0 14 14"><rect x="0.8" y="0.8" width="12.4" height="12.4" rx="2" stroke="#9050a8" stroke-width="1.4" fill="none"/><path d="M0.8 5 H13.2 M0.8 9 H13.2 M4.5 0.8 V13.2" stroke="#9050a8" stroke-width="1.3"/></svg>
<div class="t" style="left:43.5px;top:598.55px;font-size:14px;color:#4a4a4a;letter-spacing:0.15px;-webkit-text-stroke:0.35px #4a4a4a">ALL bookings</div>
<svg style="left:44px;top:624px;" width="12" height="12" viewBox="0 0 12 12"><path d="M6 0.3 L7.6 4.2 L11.8 4.4 L8.6 7.1 L9.7 11.3 L6 9 L2.3 11.3 L3.4 7.1 L0.2 4.4 L4.4 4.2 Z" fill="#c4c4c4"/></svg>
<svg style="left:63px;top:624px;" width="13" height="13" viewBox="0 0 13 13"><path d="M1 12.5 L2.5 8 L8 2.5 L10.5 5 L5 10.5 Z" fill="#9b5fb0"/><circle cx="9.5" cy="7.5" r="2" fill="#9b5fb0"/><path d="M7.5 11.5 H12" stroke="#9b5fb0" stroke-width="2"/><path d="M9 1 L11 3" stroke="#9b5fb0" stroke-width="1.5"/></svg>
<svg style="left:83px;top:624px;" width="13" height="13" viewBox="0 0 13 13"><circle cx="6.5" cy="6.5" r="5.8" stroke="#c8a6d6" stroke-width="1.1" fill="none"/><path d="M3.8 6 A2.8 2.8 0 0 1 9 5" stroke="#b48cc6" stroke-width="1" fill="none"/><path d="M9.2 7 A2.8 2.8 0 0 1 4 8" stroke="#b48cc6" stroke-width="1" fill="none"/></svg>
<div class="a" style="left:181px;top:623px;width:24px;height:24px;background:#fff;border:1px solid #dcc6e4;border-radius:4px"></div>
<svg style="left:185px;top:627px;" width="16" height="16" viewBox="0 0 16 16"><circle cx="8" cy="8" r="7.2" stroke="#9b5fb0" stroke-width="1.2" fill="none"/><circle cx="8" cy="4.6" r="1" fill="#9b5fb0"/><path d="M8 6.8 V12" stroke="#9b5fb0" stroke-width="1.4"/></svg>
<div class="a" style="left:213px;top:623px;width:64px;height:24px;background:#fff;border:1px solid #dcc6e4;border-radius:4px"></div>
<div class="t" style="left:-55px;width:600px;text-align:center;top:629.60px;font-size:13px;color:#9b5fb0;letter-spacing:-0.1px;-webkit-text-stroke:0.4px #9b5fb0">Apply</div>
<div class="a" style="left:11px;top:664px;width:24px;height:24px;background:#fff;border:1px solid #dcc6e4;border-radius:4px"></div>
<svg style="left:16px;top:669px;" width="14" height="14" viewBox="0 0 14 14"><rect x="0.8" y="0.8" width="12.4" height="12.4" rx="2" stroke="#9050a8" stroke-width="1.4" fill="none"/><path d="M0.8 5 H13.2 M0.8 9 H13.2 M4.5 0.8 V13.2" stroke="#9050a8" stroke-width="1.3"/></svg>
<div class="t" style="left:43.5px;top:667.55px;font-size:14px;color:#4a4a4a;letter-spacing:0.15px;-webkit-text-stroke:0.35px #4a4a4a">Ideal bookings</div>
<div class="a" style="left:302px;top:185px;width:19px;height:486px;background:#9158a5;"></div>
<svg style="left:307px;top:585px;" width="7" height="12" viewBox="0 0 7 12"><path d="M6 1 L1.5 6 L6 11" stroke="#fff" stroke-width="1.5" fill="none"/></svg>
<div class="a" style="left:321px;top:185px;width:1077px;height:486px;background:#fff;"></div>
<div class="t" style="left:324px;top:194.30px;font-size:13px;color:#222;letter-spacing:-0.1px;">System</div>
<div class="a" style="left:386px;top:188px;width:1px;height:27px;background:#c9c9c9;"></div>
<div class="t" style="left:389px;top:193.87px;font-size:13.5px;color:#1677d4;font-weight:bold;letter-spacing:-0.2px;">User Info</div>
<div class="a" style="left:387px;top:215px;width:1011px;height:2px;background:#0a78d7;"></div>
<div class="a" style="left:321px;top:249px;width:1077px;height:1px;background:#a8a8a8;"></div>
<div class="a" style="left:341px;top:221px;width:1px;height:26px;background:#c9c9c9;"></div>
<div class="a" style="left:361px;top:221px;width:1px;height:26px;background:#c9c9c9;"></div>
<div class="a" style="left:386px;top:221px;width:1px;height:26px;background:#c9c9c9;"></div>
<div class="a" style="left:562px;top:221px;width:1px;height:26px;background:#c9c9c9;"></div>
<div class="a" style="left:1186px;top:221px;width:1px;height:26px;background:#c9c9c9;"></div>
<div class="a" style="left:1338px;top:221px;width:1px;height:26px;background:#c9c9c9;"></div>
<div class="a" style="left:321px;top:215px;width:66px;height:1px;background:#c4c4c4;"></div>
<svg style="left:327px;top:227px;" width="10" height="11" viewBox="0 0 10 11"><path d="M2.6 4.5 V3.3 A2.4 2.4 0 0 1 7.4 3.3 V4.5" stroke="#e8ad55" stroke-width="1.7" fill="none"/><rect x="0.8" y="4.5" width="8.4" height="6" rx="0.8" fill="#e8ad55"/><rect x="4.3" y="6.5" width="1.5" height="2" fill="#fff"/></svg>
<svg style="left:347px;top:227px;" width="10" height="11" viewBox="0 0 10 11"><path d="M2.6 4.5 V3.3 A2.4 2.4 0 0 1 7.4 3.3 V4.5" stroke="#e8ad55" stroke-width="1.7" fill="none"/><rect x="0.8" y="4.5" width="8.4" height="6" rx="0.8" fill="#e8ad55"/><rect x="4.3" y="6.5" width="1.5" height="2" fill="#fff"/></svg>
<svg style="left:367px;top:227px;" width="10" height="11" viewBox="0 0 10 11"><path d="M2.6 4.5 V3.3 A2.4 2.4 0 0 1 7.4 3.3 V4.5" stroke="#e8ad55" stroke-width="1.7" fill="none"/><rect x="0.8" y="4.5" width="8.4" height="6" rx="0.8" fill="#e8ad55"/><rect x="4.3" y="6.5" width="1.5" height="2" fill="#fff"/></svg>
<div class="t" style="left:381px;top:227.20px;font-size:13px;color:#222;">:</div>
<div class="t" style="left:389px;top:227.20px;font-size:13px;color:#222;letter-spacing:-0.1px;">User Display Name</div>
<svg style="left:550px;top:230px;" width="10" height="5" viewBox="0 0 10 5"><path d="M0 5 L5 0 L10 5 Z" fill="#b5b5b5"/></svg>
<div class="a" style="left:563px;top:217px;width:112px;height:32px;background:#0078d7;"></div>
<div class="t" style="left:565px;top:227.20px;font-size:13px;color:#fff;letter-spacing:-0.1px;">Username</div>
<div class="t" style="left:1177px;top:227.20px;font-size:13px;color:#222;">..</div>
<div class="t" style="left:1189px;top:227.20px;font-size:13px;color:#222;letter-spacing:-0.12px;">Effective Assigned Licen...</div>
<div class="t" style="left:1341px;top:227.20px;font-size:13px;color:#222;letter-spacing:-0.1px;">Unit Cos...</div>
<div class="a" style="left:321px;top:277px;width:1077px;height:1px;background:#f0f0f0;"></div>
<div class="a" style="left:341px;top:250px;width:1px;height:28px;background:#f0f0f0;"></div>
<div class="a" style="left:361px;top:250px;width:1px;height:28px;background:#f0f0f0;"></div>
<div class="a" style="left:386px;top:250px;width:1px;height:28px;background:#f0f0f0;"></div>
<div class="a" style="left:1186px;top:250px;width:1px;height:28px;background:#f0f0f0;"></div>
<div class="a" style="left:1338px;top:250px;width:1px;height:28px;background:#f0f0f0;"></div>
<div class="a" style="left:562px;top:250px;width:2px;height:28px;background:#1a5fb4;"></div>
<svg style="left:345px;top:257px;" width="14" height="14" viewBox="0 0 14 14"><circle cx="7" cy="4" r="3.8" fill="#2f7fc3"/><path d="M0 13.5 V12 Q0 8.8 3.5 8.8 H10.5 Q14 8.8 14 12 V13.5 Z" fill="#2f7fc3"/></svg>
<div class="t" style="left:389px;top:258.20px;font-size:13px;color:#222;letter-spacing:0.05px;">Angel Torres</div>
<div class="clip" style="left:565px;top:250px;width:110px;height:28px">
<div class="t" style="left:0px;top:8.20px;font-size:13px;color:#222;letter-spacing:0.05px;">Angel.Torres@sygx2.onmicrosoft.com</div>
</div>
<div class="clip" style="left:1189px;top:250px;width:147px;height:28px">
<div class="t" style="left:0.5px;top:8.20px;font-size:13px;color:#222;letter-spacing:0.05px;">Microsoft Power Automate</div>
</div>
<div class="t" style="right:-3px;top:258.20px;font-size:13px;color:#222;letter-spacing:-0.1px;">$37.00</div>
<div class="a" style="left:321px;top:305px;width:1077px;height:1px;background:#f0f0f0;"></div>
<div class="a" style="left:341px;top:278px;width:1px;height:28px;background:#f0f0f0;"></div>
<div class="a" style="left:361px;top:278px;width:1px;height:28px;background:#f0f0f0;"></div>
<div class="a" style="left:386px;top:278px;width:1px;height:28px;background:#f0f0f0;"></div>
<div class="a" style="left:1186px;top:278px;width:1px;height:28px;background:#f0f0f0;"></div>
<div class="a" style="left:1338px;top:278px;width:1px;height:28px;background:#f0f0f0;"></div>
<div class="a" style="left:562px;top:278px;width:2px;height:28px;background:#1a5fb4;"></div>
<svg style="left:345px;top:285px;" width="14" height="14" viewBox="0 0 14 14"><circle cx="7" cy="4" r="3.8" fill="#2f7fc3"/><path d="M0 13.5 V12 Q0 8.8 3.5 8.8 H10.5 Q14 8.8 14 12 V13.5 Z" fill="#2f7fc3"/></svg>
<div class="t" style="left:389px;top:286.20px;font-size:13px;color:#222;letter-spacing:0.05px;">Annabelle Bentley</div>
<div class="clip" style="left:565px;top:278px;width:110px;height:28px">
<div class="t" style="left:0px;top:8.20px;font-size:13px;color:#222;letter-spacing:0.05px;">Annabelle.Bentley@sygx2.onmicrosoft.com</div>
</div>
<div class="clip" style="left:1189px;top:278px;width:147px;height:28px">
<div class="t" style="left:0.5px;top:8.20px;font-size:13px;color:#222;letter-spacing:0.05px;">Microsoft Power Automate</div>
</div>
<div class="t" style="right:-3px;top:286.20px;font-size:13px;color:#222;letter-spacing:-0.1px;">$37.00</div>
<div class="a" style="left:321px;top:333px;width:1077px;height:1px;background:#f0f0f0;"></div>
<div class="a" style="left:341px;top:306px;width:1px;height:28px;background:#f0f0f0;"></div>
<div class="a" style="left:361px;top:306px;width:1px;height:28px;background:#f0f0f0;"></div>
<div class="a" style="left:386px;top:306px;width:1px;height:28px;background:#f0f0f0;"></div>
<div class="a" style="left:1186px;top:306px;width:1px;height:28px;background:#f0f0f0;"></div>
<div class="a" style="left:1338px;top:306px;width:1px;height:28px;background:#f0f0f0;"></div>
<div class="a" style="left:562px;top:306px;width:2px;height:28px;background:#1a5fb4;"></div>
<svg style="left:345px;top:313px;" width="14" height="14" viewBox="0 0 14 14"><circle cx="7" cy="4" r="3.8" fill="#2f7fc3"/><path d="M0 13.5 V12 Q0 8.8 3.5 8.8 H10.5 Q14 8.8 14 12 V13.5 Z" fill="#2f7fc3"/></svg>
<div class="t" style="left:389px;top:314.20px;font-size:13px;color:#222;letter-spacing:0.05px;">Annabelle Flores</div>
<div class="clip" style="left:565px;top:306px;width:110px;height:28px">
<div class="t" style="left:0px;top:8.20px;font-size:13px;color:#222;letter-spacing:0.05px;">Annabelle.Flores@sygx2.onmicrosoft.com</div>
</div>
<div class="clip" style="left:1189px;top:306px;width:147px;height:28px">
<div class="t" style="left:0.5px;top:8.20px;font-size:13px;color:#222;letter-spacing:0.05px;">Microsoft Power Automate</div>
</div>
<div class="t" style="right:-3px;top:314.20px;font-size:13px;color:#222;letter-spacing:-0.1px;">$37.00</div>
<div class="a" style="left:321px;top:361px;width:1077px;height:1px;background:#f0f0f0;"></div>
<div class="a" style="left:341px;top:334px;width:1px;height:28px;background:#f0f0f0;"></div>
<div class="a" style="left:361px;top:334px;width:1px;height:28px;background:#f0f0f0;"></div>
<div class="a" style="left:386px;top:334px;width:1px;height:28px;background:#f0f0f0;"></div>
<div class="a" style="left:1186px;top:334px;width:1px;height:28px;background:#f0f0f0;"></div>
<div class="a" style="left:1338px;top:334px;width:1px;height:28px;background:#f0f0f0;"></div>
<div class="a" style="left:562px;top:334px;width:2px;height:28px;background:#1a5fb4;"></div>
<svg style="left:345px;top:341px;" width="14" height="14" viewBox="0 0 14 14"><circle cx="7" cy="4" r="3.8" fill="#2f7fc3"/><path d="M0 13.5 V12 Q0 8.8 3.5 8.8 H10.5 Q14 8.8 14 12 V13.5 Z" fill="#2f7fc3"/></svg>
<div class="t" style="left:389px;top:342.20px;font-size:13px;color:#222;letter-spacing:0.05px;">Ariana Kisher</div>
<div class="clip" style="left:565px;top:334px;width:110px;height:28px">
<div class="t" style="left:0px;top:8.20px;font-size:13px;color:#222;letter-spacing:0.05px;">Ariana-Kisher@ovh.com</div>
</div>
<div class="a" style="left:1187px;top:334px;width:211px;height:27px;background:#d4d4d4;"></div>
<div class="a" style="left:1338px;top:334px;width:1px;height:27px;background:#eaeaea;"></div>
<div class="t" style="left:1190px;top:342.20px;font-size:13px;color:#7a7a7a;letter-spacing:-0.1px;">-- Unlicensed --</div>
<div class="a" style="left:321px;top:389px;width:1077px;height:1px;background:#f0f0f0;"></div>
<div class="a" style="left:341px;top:362px;width:1px;height:28px;background:#f0f0f0;"></div>
<div class="a" style="left:361px;top:362px;width:1px;height:28px;background:#f0f0f0;"></div>
<div class="a" style="left:386px;top:362px;width:1px;height:28px;background:#f0f0f0;"></div>
<div class="a" style="left:1186px;top:362px;width:1px;height:28px;background:#f0f0f0;"></div>
<div class="a" style="left:1338px;top:362px;width:1px;height:28px;background:#f0f0f0;"></div>
<div class="a" style="left:562px;top:362px;width:2px;height:28px;background:#1a5fb4;"></div>
<svg style="left:345px;top:369px;" width="14" height="14" viewBox="0 0 14 14"><circle cx="7" cy="4" r="3.8" fill="#2f7fc3"/><path d="M0 13.5 V12 Q0 8.8 3.5 8.8 H10.5 Q14 8.8 14 12 V13.5 Z" fill="#2f7fc3"/></svg>
<div class="t" style="left:389px;top:370.20px;font-size:13px;color:#222;letter-spacing:0.05px;">Ariella Bolt</div>
<div class="clip" style="left:565px;top:362px;width:110px;height:28px">
<div class="t" style="left:0px;top:8.20px;font-size:13px;color:#222;letter-spacing:0.05px;">Ariella.Bolt@sygx2.onmicrosoft.com</div>
</div>
<div class="clip" style="left:1189px;top:362px;width:147px;height:28px">
<div class="t" style="left:0.5px;top:8.20px;font-size:13px;color:#222;letter-spacing:0.05px;">Microsoft Power Automate</div>
</div>
<div class="t" style="right:-3px;top:370.20px;font-size:13px;color:#222;letter-spacing:-0.1px;">$37.00</div>
<div class="a" style="left:321px;top:417px;width:1077px;height:1px;background:#f0f0f0;"></div>
<div class="a" style="left:341px;top:390px;width:1px;height:28px;background:#f0f0f0;"></div>
<div class="a" style="left:361px;top:390px;width:1px;height:28px;background:#f0f0f0;"></div>
<div class="a" style="left:386px;top:390px;width:1px;height:28px;background:#f0f0f0;"></div>
<div class="a" style="left:1186px;top:390px;width:1px;height:28px;background:#f0f0f0;"></div>
<div class="a" style="left:1338px;top:390px;width:1px;height:28px;background:#f0f0f0;"></div>
<div class="a" style="left:562px;top:390px;width:2px;height:28px;background:#1a5fb4;"></div>
<svg style="left:345px;top:397px;" width="14" height="14" viewBox="0 0 14 14"><circle cx="7" cy="4" r="3.8" fill="#2f7fc3"/><path d="M0 13.5 V12 Q0 8.8 3.5 8.8 H10.5 Q14 8.8 14 12 V13.5 Z" fill="#2f7fc3"/></svg>
<div class="t" style="left:389px;top:398.20px;font-size:13px;color:#222;letter-spacing:0.05px;">Ariella Kade</div>
<div class="clip" style="left:565px;top:390px;width:110px;height:28px">
<div class="t" style="left:0px;top:8.20px;font-size:13px;color:#222;letter-spacing:0.05px;">Ariella.Kade@sygx2.onmicrosoft.com</div>
</div>
<div class="clip" style="left:1189px;top:390px;width:147px;height:28px">
<div class="t" style="left:0.5px;top:8.20px;font-size:13px;color:#222;letter-spacing:0.05px;">Microsoft Power Automate</div>
</div>
<div class="t" style="right:-3px;top:398.20px;font-size:13px;color:#222;letter-spacing:-0.1px;">$37.00</div>
<div class="a" style="left:321px;top:418px;width:1077px;height:28px;background:#0078d7;"></div>
<div class="a" style="left:321px;top:445px;width:1077px;height:1px;background:#fff;"></div>
<div class="a" style="left:321px;top:418px;width:1px;height:28px;background:#f4f4f4;"></div>
<div class="a" style="left:341px;top:418px;width:1px;height:28px;background:#fff;"></div>
<div class="a" style="left:361px;top:418px;width:1px;height:28px;background:#fff;"></div>
<div class="a" style="left:386px;top:418px;width:1px;height:28px;background:#fff;"></div>
<div class="a" style="left:1186px;top:418px;width:1px;height:28px;background:#fff;"></div>
<div class="a" style="left:1338px;top:418px;width:1px;height:28px;background:#fff;"></div>
<div class="a" style="left:562px;top:418px;width:2px;height:28px;background:#333;"></div>
<svg style="left:343px;top:422px;" width="18" height="18" viewBox="0 0 18 18"><path d="M1.5 16 Q1.5 11.5 6 11.5 H12 Q16.5 11.5 16.5 16 V17 H1.5 Z" fill="#2f7fc3" stroke="#fff" stroke-width="1.1"/><circle cx="9" cy="6.6" r="4.9" fill="#2f7fc3" stroke="#fff" stroke-width="1.1"/></svg>
<div class="a" style="left:324px;top:423px;width:16px;height:16px;background:#fff;"></div>
<svg style="left:324px;top:423px;" width="16" height="16" viewBox="0 0 16 16"><circle cx="8" cy="7.8" r="5.8" stroke="#808080" stroke-width="1.2" fill="none"/><circle cx="8" cy="7.8" r="2.9" fill="#9a9a9a"/></svg>
<div class="t" style="left:389px;top:426.20px;font-size:13px;color:#fff;letter-spacing:0.05px;">Arlo Gonzalez</div>
<div class="clip" style="left:565px;top:418px;width:110px;height:28px">
<div class="t" style="left:0px;top:8.20px;font-size:13px;color:#fff;letter-spacing:0.05px;">Arlo.Gonzalez@sygx2.onmicrosoft.com</div>
</div>
<div class="clip" style="left:1189px;top:418px;width:147px;height:28px">
<div class="t" style="left:0.5px;top:8.20px;font-size:13px;color:#fff;letter-spacing:0.05px;">Microsoft Power Automate</div>
</div>
<div class="t" style="right:-3px;top:426.20px;font-size:13px;color:#fff;letter-spacing:-0.1px;">$37.00</div>
<div class="a" style="left:321px;top:446px;width:1077px;height:28px;background:#0078d7;"></div>
<div class="a" style="left:321px;top:473px;width:1077px;height:1px;background:#fff;"></div>
<div class="a" style="left:321px;top:446px;width:1px;height:28px;background:#f4f4f4;"></div>
<div class="a" style="left:341px;top:446px;width:1px;height:28px;background:#fff;"></div>
<div class="a" style="left:361px;top:446px;width:1px;height:28px;background:#fff;"></div>
<div class="a" style="left:386px;top:446px;width:1px;height:28px;background:#fff;"></div>
<div class="a" style="left:1186px;top:446px;width:1px;height:28px;background:#fff;"></div>
<div class="a" style="left:1338px;top:446px;width:1px;height:28px;background:#fff;"></div>
<div class="a" style="left:562px;top:446px;width:2px;height:28px;background:#333;"></div>
<svg style="left:343px;top:450px;" width="18" height="18" viewBox="0 0 18 18"><path d="M1.5 16 Q1.5 11.5 6 11.5 H12 Q16.5 11.5 16.5 16 V17 H1.5 Z" fill="#2f7fc3" stroke="#fff" stroke-width="1.1"/><circle cx="9" cy="6.6" r="4.9" fill="#2f7fc3" stroke="#fff" stroke-width="1.1"/></svg>
<div class="t" style="left:389px;top:454.20px;font-size:13px;color:#fff;letter-spacing:0.05px;">Arya Lee</div>
<div class="clip" style="left:565px;top:446px;width:110px;height:28px">
<div class="t" style="left:0px;top:8.20px;font-size:13px;color:#fff;letter-spacing:0.05px;">Arya.Lee@sygx2.onmicrosoft.com</div>
</div>
<div class="clip" style="left:1189px;top:446px;width:147px;height:28px">
<div class="t" style="left:0.5px;top:8.20px;font-size:13px;color:#fff;letter-spacing:0.05px;">Microsoft Power Automate</div>
</div>
<div class="t" style="right:-3px;top:454.20px;font-size:13px;color:#fff;letter-spacing:-0.1px;">$37.00</div>
<div class="a" style="left:321px;top:474px;width:1077px;height:28px;background:#0078d7;"></div>
<div class="a" style="left:321px;top:501px;width:1077px;height:1px;background:#fff;"></div>
<div class="a" style="left:321px;top:474px;width:1px;height:28px;background:#f4f4f4;"></div>
<div class="a" style="left:341px;top:474px;width:1px;height:28px;background:#fff;"></div>
<div class="a" style="left:361px;top:474px;width:1px;height:28px;background:#fff;"></div>
<div class="a" style="left:386px;top:474px;width:1px;height:28px;background:#fff;"></div>
<div class="a" style="left:1186px;top:474px;width:1px;height:28px;background:#fff;"></div>
<div class="a" style="left:1338px;top:474px;width:1px;height:28px;background:#fff;"></div>
<div class="a" style="left:562px;top:474px;width:2px;height:28px;background:#333;"></div>
<svg style="left:343px;top:478px;" width="18" height="18" viewBox="0 0 18 18"><path d="M1.5 16 Q1.5 11.5 6 11.5 H12 Q16.5 11.5 16.5 16 V17 H1.5 Z" fill="#2f7fc3" stroke="#fff" stroke-width="1.1"/><circle cx="9" cy="6.6" r="4.9" fill="#2f7fc3" stroke="#fff" stroke-width="1.1"/></svg>
<div class="a" style="left:324px;top:479px;width:16px;height:16px;background:#fff;"></div>
<svg style="left:324px;top:479px;" width="16" height="16" viewBox="0 0 16 16"><circle cx="8" cy="7.8" r="5.8" stroke="#808080" stroke-width="1.2" fill="none"/><circle cx="8" cy="7.8" r="2.9" fill="#9a9a9a"/></svg>
<div class="t" style="left:389px;top:482.20px;font-size:13px;color:#fff;letter-spacing:0.05px;">Athena May</div>
<div class="clip" style="left:565px;top:474px;width:110px;height:28px">
<div class="t" style="left:0px;top:8.20px;font-size:13px;color:#fff;letter-spacing:0.05px;">Athena.May@sygx2.onmicrosoft.com</div>
</div>
<div class="clip" style="left:1189px;top:474px;width:147px;height:28px">
<div class="t" style="left:0.5px;top:8.20px;font-size:13px;color:#fff;letter-spacing:0.05px;">Microsoft Power Automate</div>
</div>
<div class="t" style="right:-3px;top:482.20px;font-size:13px;color:#fff;letter-spacing:-0.1px;">$37.00</div>
<div class="a" style="left:321px;top:502px;width:1077px;height:28px;background:#0078d7;"></div>
<div class="a" style="left:321px;top:529px;width:1077px;height:1px;background:#fff;"></div>
<div class="a" style="left:321px;top:502px;width:1px;height:28px;background:#f4f4f4;"></div>
<div class="a" style="left:341px;top:502px;width:1px;height:28px;background:#fff;"></div>
<div class="a" style="left:361px;top:502px;width:1px;height:28px;background:#fff;"></div>
<div class="a" style="left:386px;top:502px;width:1px;height:28px;background:#fff;"></div>
<div class="a" style="left:1186px;top:502px;width:1px;height:28px;background:#fff;"></div>
<div class="a" style="left:1338px;top:502px;width:1px;height:28px;background:#fff;"></div>
<div class="a" style="left:562px;top:502px;width:2px;height:28px;background:#333;"></div>
<svg style="left:343px;top:506px;" width="18" height="18" viewBox="0 0 18 18"><path d="M1.5 16 Q1.5 11.5 6 11.5 H12 Q16.5 11.5 16.5 16 V17 H1.5 Z" fill="#2f7fc3" stroke="#fff" stroke-width="1.1"/><circle cx="9" cy="6.6" r="4.9" fill="#2f7fc3" stroke="#fff" stroke-width="1.1"/></svg>
<div class="t" style="left:389px;top:510.20px;font-size:13px;color:#fff;letter-spacing:0.05px;">Atlas Keller</div>
<div class="clip" style="left:565px;top:502px;width:110px;height:28px">
<div class="t" style="left:0px;top:8.20px;font-size:13px;color:#fff;letter-spacing:0.05px;">Atlas.Keller@sygx2.onmicrosoft.com</div>
</div>
<div class="clip" style="left:1189px;top:502px;width:147px;height:28px">
<div class="t" style="left:0.5px;top:8.20px;font-size:13px;color:#fff;letter-spacing:0.05px;">Microsoft Power Automate</div>
</div>
<div class="t" style="right:-3px;top:510.20px;font-size:13px;color:#fff;letter-spacing:-0.1px;">$37.00</div>
<div class="a" style="left:321px;top:530px;width:1077px;height:28px;background:#0078d7;"></div>
<div class="a" style="left:321px;top:557px;width:1077px;height:1px;background:#fff;"></div>
<div class="a" style="left:321px;top:530px;width:1px;height:28px;background:#f4f4f4;"></div>
<div class="a" style="left:341px;top:530px;width:1px;height:28px;background:#fff;"></div>
<div class="a" style="left:361px;top:530px;width:1px;height:28px;background:#fff;"></div>
<div class="a" style="left:386px;top:530px;width:1px;height:28px;background:#fff;"></div>
<div class="a" style="left:1186px;top:530px;width:1px;height:28px;background:#fff;"></div>
<div class="a" style="left:1338px;top:530px;width:1px;height:28px;background:#fff;"></div>
<div class="a" style="left:562px;top:530px;width:2px;height:28px;background:#333;"></div>
<svg style="left:343px;top:534px;" width="18" height="18" viewBox="0 0 18 18"><path d="M1.5 16 Q1.5 11.5 6 11.5 H12 Q16.5 11.5 16.5 16 V17 H1.5 Z" fill="#2f7fc3" stroke="#fff" stroke-width="1.1"/><circle cx="9" cy="6.6" r="4.9" fill="#2f7fc3" stroke="#fff" stroke-width="1.1"/></svg>
<div class="t" style="left:389px;top:538.20px;font-size:13px;color:#fff;letter-spacing:0.05px;">Avery Raven</div>
<div class="clip" style="left:565px;top:530px;width:110px;height:28px">
<div class="t" style="left:0px;top:8.20px;font-size:13px;color:#fff;letter-spacing:0.05px;">Avery.Raven@sygx2.onmicrosoft.com</div>
</div>
<div class="clip" style="left:1189px;top:530px;width:147px;height:28px">
<div class="t" style="left:0.5px;top:8.20px;font-size:13px;color:#fff;letter-spacing:0.05px;">Microsoft Power Automate</div>
</div>
<div class="t" style="right:-3px;top:538.20px;font-size:13px;color:#fff;letter-spacing:-0.1px;">$37.00</div>
<div class="a" style="left:321px;top:558px;width:1077px;height:28px;background:#0078d7;"></div>
<div class="a" style="left:321px;top:585px;width:1077px;height:1px;background:#fff;"></div>
<div class="a" style="left:321px;top:558px;width:1px;height:28px;background:#f4f4f4;"></div>
<div class="a" style="left:341px;top:558px;width:1px;height:28px;background:#fff;"></div>
<div class="a" style="left:361px;top:558px;width:1px;height:28px;background:#fff;"></div>
<div class="a" style="left:386px;top:558px;width:1px;height:28px;background:#fff;"></div>
<div class="a" style="left:1186px;top:558px;width:1px;height:28px;background:#fff;"></div>
<div class="a" style="left:1338px;top:558px;width:1px;height:28px;background:#fff;"></div>
<div class="a" style="left:562px;top:558px;width:2px;height:28px;background:#333;"></div>
<svg style="left:343px;top:562px;" width="18" height="18" viewBox="0 0 18 18"><path d="M1.5 16 Q1.5 11.5 6 11.5 H12 Q16.5 11.5 16.5 16 V17 H1.5 Z" fill="#2f7fc3" stroke="#fff" stroke-width="1.1"/><circle cx="9" cy="6.6" r="4.9" fill="#2f7fc3" stroke="#fff" stroke-width="1.1"/></svg>
<div class="t" style="left:389px;top:566.20px;font-size:13px;color:#fff;letter-spacing:0.05px;">Bentley Peterson</div>
<div class="clip" style="left:565px;top:558px;width:110px;height:28px">
<div class="t" style="left:0px;top:8.20px;font-size:13px;color:#fff;letter-spacing:0.05px;">Bentley.Peterson@sygx2.onmicrosoft.com</div>
</div>
<div class="clip" style="left:1189px;top:558px;width:147px;height:28px">
<div class="t" style="left:0.5px;top:8.20px;font-size:13px;color:#fff;letter-spacing:0.05px;">Microsoft Power Automate</div>
</div>
<div class="t" style="right:-3px;top:566.20px;font-size:13px;color:#fff;letter-spacing:-0.1px;">$37.00</div>
<div class="a" style="left:321px;top:586px;width:1077px;height:28px;background:#0078d7;"></div>
<div class="a" style="left:321px;top:613px;width:1077px;height:1px;background:#fff;"></div>
<div class="a" style="left:321px;top:586px;width:1px;height:28px;background:#f4f4f4;"></div>
<div class="a" style="left:341px;top:586px;width:1px;height:28px;background:#fff;"></div>
<div class="a" style="left:361px;top:586px;width:1px;height:28px;background:#fff;"></div>
<div class="a" style="left:386px;top:586px;width:1px;height:28px;background:#fff;"></div>
<div class="a" style="left:1186px;top:586px;width:1px;height:28px;background:#fff;"></div>
<div class="a" style="left:1338px;top:586px;width:1px;height:28px;background:#fff;"></div>
<div class="a" style="left:562px;top:586px;width:2px;height:28px;background:#333;"></div>
<svg style="left:343px;top:590px;" width="18" height="18" viewBox="0 0 18 18"><path d="M1.5 16 Q1.5 11.5 6 11.5 H12 Q16.5 11.5 16.5 16 V17 H1.5 Z" fill="#2f7fc3" stroke="#fff" stroke-width="1.1"/><circle cx="9" cy="6.6" r="4.9" fill="#2f7fc3" stroke="#fff" stroke-width="1.1"/></svg>
<div class="t" style="left:389px;top:594.20px;font-size:13px;color:#fff;letter-spacing:0.05px;">BinghuaY</div>
<div class="clip" style="left:565px;top:586px;width:110px;height:28px">
<div class="t" style="left:0px;top:8.20px;font-size:13px;color:#fff;letter-spacing:0.05px;">ga_BY@sygx2.onmicrosoft.com</div>
</div>
<div class="clip" style="left:1189px;top:586px;width:147px;height:28px">
<div class="t" style="left:0.5px;top:8.20px;font-size:13px;color:#fff;letter-spacing:0.05px;">Microsoft 365 E5 Developer</div>
</div>
<div class="t" style="right:-3px;top:594.20px;font-size:13px;color:#fff;letter-spacing:-0.1px;">$45.00</div>
<div class="a" style="left:321px;top:614px;width:1077px;height:28px;background:#0078d7;"></div>
<div class="a" style="left:321px;top:641px;width:1077px;height:1px;background:#fff;"></div>
<div class="a" style="left:321px;top:614px;width:1px;height:28px;background:#f4f4f4;"></div>
<div class="a" style="left:341px;top:614px;width:1px;height:28px;background:#fff;"></div>
<div class="a" style="left:361px;top:614px;width:1px;height:28px;background:#fff;"></div>
<div class="a" style="left:386px;top:614px;width:1px;height:28px;background:#fff;"></div>
<div class="a" style="left:1186px;top:614px;width:1px;height:28px;background:#fff;"></div>
<div class="a" style="left:1338px;top:614px;width:1px;height:28px;background:#fff;"></div>
<div class="a" style="left:562px;top:614px;width:2px;height:28px;background:#333;"></div>
<svg style="left:343px;top:618px;" width="18" height="18" viewBox="0 0 18 18"><path d="M1.5 16 Q1.5 11.5 6 11.5 H12 Q16.5 11.5 16.5 16 V17 H1.5 Z" fill="#2f7fc3" stroke="#fff" stroke-width="1.1"/><circle cx="9" cy="6.6" r="4.9" fill="#2f7fc3" stroke="#fff" stroke-width="1.1"/></svg>
<div class="t" style="left:389px;top:622.20px;font-size:13px;color:#fff;letter-spacing:0.05px;">Blakely Adams</div>
<div class="clip" style="left:565px;top:614px;width:110px;height:28px">
<div class="t" style="left:0px;top:8.20px;font-size:13px;color:#fff;letter-spacing:0.05px;">Blakely.Adams@sygx2.onmicrosoft.com</div>
</div>
<div class="clip" style="left:1189px;top:614px;width:147px;height:28px">
<div class="t" style="left:0.5px;top:8.20px;font-size:13px;color:#fff;letter-spacing:0.05px;">Microsoft Power Automate</div>
</div>
<div class="t" style="right:-3px;top:622.20px;font-size:13px;color:#fff;letter-spacing:-0.1px;">$37.00</div>
<div class="a" style="left:321px;top:642px;width:1077px;height:28px;background:#0078d7;"></div>
<div class="a" style="left:321px;top:669px;width:1077px;height:1px;background:#fff;"></div>
<div class="a" style="left:321px;top:642px;width:1px;height:28px;background:#f4f4f4;"></div>
<div class="a" style="left:341px;top:642px;width:1px;height:28px;background:#fff;"></div>
<div class="a" style="left:361px;top:642px;width:1px;height:28px;background:#fff;"></div>
<div class="a" style="left:386px;top:642px;width:1px;height:28px;background:#fff;"></div>
<div class="a" style="left:1186px;top:642px;width:1px;height:28px;background:#fff;"></div>
<div class="a" style="left:1338px;top:642px;width:1px;height:28px;background:#fff;"></div>
<div class="a" style="left:562px;top:642px;width:2px;height:28px;background:#333;"></div>
<svg style="left:343px;top:646px;" width="18" height="18" viewBox="0 0 18 18"><path d="M1.5 16 Q1.5 11.5 6 11.5 H12 Q16.5 11.5 16.5 16 V17 H1.5 Z" fill="#2f7fc3" stroke="#fff" stroke-width="1.1"/><circle cx="9" cy="6.6" r="4.9" fill="#2f7fc3" stroke="#fff" stroke-width="1.1"/></svg>
<div class="t" style="left:389px;top:650.20px;font-size:13px;color:#fff;letter-spacing:0.05px;">Bob Smith</div>
<div class="clip" style="left:565px;top:642px;width:110px;height:28px">
<div class="t" style="left:0px;top:8.20px;font-size:13px;color:#fff;letter-spacing:0.05px;">bsmith@sygx2.onmicrosoft.com</div>
</div>
<div class="clip" style="left:1189px;top:642px;width:147px;height:28px">
<div class="t" style="left:0.5px;top:8.20px;font-size:13px;color:#fff;letter-spacing:0.05px;">Microsoft Power Automate</div>
</div>
<div class="t" style="right:-3px;top:650.20px;font-size:13px;color:#fff;letter-spacing:-0.1px;">$37.00</div>
<div class="a" style="left:321px;top:670px;width:1077px;height:28px;background:#0078d7;"></div>
<div class="a" style="left:321px;top:697px;width:1077px;height:1px;background:#fff;"></div>
<div class="a" style="left:321px;top:670px;width:1px;height:28px;background:#f4f4f4;"></div>
<div class="a" style="left:341px;top:670px;width:1px;height:28px;background:#fff;"></div>
<div class="a" style="left:361px;top:670px;width:1px;height:28px;background:#fff;"></div>
<div class="a" style="left:386px;top:670px;width:1px;height:28px;background:#fff;"></div>
<div class="a" style="left:1186px;top:670px;width:1px;height:28px;background:#fff;"></div>
<div class="a" style="left:1338px;top:670px;width:1px;height:28px;background:#fff;"></div>
<div class="a" style="left:562px;top:670px;width:2px;height:28px;background:#333;"></div>
<svg style="left:343px;top:674px;" width="18" height="18" viewBox="0 0 18 18"><path d="M1.5 16 Q1.5 11.5 6 11.5 H12 Q16.5 11.5 16.5 16 V17 H1.5 Z" fill="#2f7fc3" stroke="#fff" stroke-width="1.1"/><circle cx="9" cy="6.6" r="4.9" fill="#2f7fc3" stroke="#fff" stroke-width="1.1"/></svg>
<div class="t" style="left:389px;top:678.20px;font-size:13px;color:#fff;letter-spacing:0.05px;">Brad Miller</div>
<div class="clip" style="left:565px;top:670px;width:110px;height:28px">
<div class="t" style="left:0px;top:8.20px;font-size:13px;color:#fff;letter-spacing:0.05px;">bmiller@sygx2.onmicrosoft.com</div>
</div>
<div class="clip" style="left:1189px;top:670px;width:147px;height:28px">
<div class="t" style="left:0.5px;top:8.20px;font-size:13px;color:#fff;letter-spacing:0.05px;">Microsoft Power Automate</div>
</div>
<div class="t" style="right:-3px;top:678.20px;font-size:13px;color:#fff;letter-spacing:-0.1px;">$37.00</div>
<div class="a" style="left:675px;top:66px;width:502px;height:610px;background:#f0f0f0;border:1px solid rgba(30,30,30,0.8);background-clip:padding-box;box-shadow:0 0 10px 2px rgba(0,0,0,0.28)"></div>
<div class="a" style="left:676px;top:67px;width:500px;height:31px;background:#fff;"></div>
<svg style="left:684px;top:74px;" width="17" height="17" viewBox="0 0 17 17"><circle cx="8.5" cy="8.5" r="7.4" stroke="#9b59b6" stroke-width="1.5" fill="none"/><path d="M3.2 5.2 Q5 3.6 7.6 5.6 L7.6 9.5 L5.8 13.2 Q3 10.5 3.2 5.2 Z" fill="#9b59b6"/><path d="M13.8 5.2 Q12 3.6 9.4 5.6 L9.4 9.5 L11.2 13.2 Q14 10.5 13.8 5.2 Z" fill="#9b59b6"/><circle cx="8.5" cy="3.6" r="1" fill="#9b59b6"/></svg>
<div class="t" style="left:705px;top:77.02px;font-size:12.5px;color:#111;letter-spacing:-0.1px;">Additional Info Load Options</div>
<svg style="left:1156px;top:77px;" width="10" height="10" viewBox="0 0 10 10"><path d="M0 0 L10 10 M10 0 L0 10" stroke="#111" stroke-width="1.2"/></svg>
<div class="a" style="left:681px;top:107px;width:490px;height:492px;background:#fff;"></div>
<div class="a" style="left:691px;top:112px;width:470px;height:87px;background:#f2f2f2;"></div>
<div class="t" style="left:701px;top:124.04px;font-size:12px;color:#222;">Choose which additional information you'd like to refresh for selected users.</div>
<div class="t" style="left:701px;top:139.64px;font-size:12px;color:#222;">Processing time depends on the number of selected users and additional info</div>
<div class="t" style="left:701px;top:155.04px;font-size:12px;color:#222;">load options.</div>
<div class="t" style="left:701px;top:170.94px;font-size:12px;color:#2b64a8;">Learn more about each option on this page.</div>
<div class="a" style="left:843px;top:207px;width:318px;height:31px;background:#f2f2f2;"></div>
<div class="t" style="left:695.5px;top:213.44px;font-size:12px;color:#222;">Basic Info</div>
<div class="t" style="left:862px;top:217.94px;font-size:12px;color:#222;">Yes (mandatory)</div>
<div class="a" style="left:843px;top:246px;width:318px;height:36px;background:#f2f2f2;"></div>
<div class="t" style="left:695.5px;top:252.44px;font-size:12px;color:#222;">Personal Info</div>
<div class="a" style="left:865px;top:254px;width:38px;height:18px;background:#c9c9c9;"></div>
<div class="a" style="left:868px;top:257px;width:35px;height:12px;background:#1a4e9e;"></div>
<div class="a" style="left:906px;top:254px;width:7px;height:18px;background:#777;"></div>
<div class="t" style="left:923px;top:256.24px;font-size:12px;color:#222;">Yes</div>
<div class="a" style="left:843px;top:290px;width:318px;height:36px;background:#f2f2f2;"></div>
<div class="t" style="left:695.5px;top:296.44px;font-size:12px;color:#222;">Mailbox Settings</div>
<div class="a" style="left:865px;top:298px;width:38px;height:18px;background:#c9c9c9;"></div>
<div class="a" style="left:868px;top:301px;width:35px;height:12px;background:#1a4e9e;"></div>
<div class="a" style="left:906px;top:298px;width:7px;height:18px;background:#777;"></div>
<div class="t" style="left:923px;top:300.24px;font-size:12px;color:#222;">Yes</div>
<div class="a" style="left:843px;top:334px;width:318px;height:36px;background:#f2f2f2;"></div>
<div class="t" style="left:695.5px;top:340.44px;font-size:12px;color:#222;">OneDrive Info</div>
<div class="a" style="left:865px;top:342px;width:38px;height:18px;background:#c9c9c9;"></div>
<div class="a" style="left:868px;top:345px;width:35px;height:12px;background:#1a4e9e;"></div>
<div class="a" style="left:906px;top:342px;width:7px;height:18px;background:#777;"></div>
<div class="t" style="left:923px;top:344.24px;font-size:12px;color:#222;">Yes</div>
<div class="a" style="left:843px;top:378px;width:318px;height:36px;background:#f2f2f2;"></div>
<div class="t" style="left:695.5px;top:384.44px;font-size:12px;color:#222;">Manager Info</div>
<div class="a" style="left:865px;top:386px;width:38px;height:18px;background:#c9c9c9;"></div>
<div class="a" style="left:868px;top:389px;width:35px;height:12px;background:#1a4e9e;"></div>
<div class="a" style="left:906px;top:386px;width:7px;height:18px;background:#777;"></div>
<div class="t" style="left:923px;top:388.24px;font-size:12px;color:#222;">Yes</div>
<div class="a" style="left:843px;top:422px;width:318px;height:36px;background:#f2f2f2;"></div>
<div class="t" style="left:695.5px;top:428.44px;font-size:12px;color:#222;">Last Sign-in</div>
<div class="a" style="left:865px;top:430px;width:7px;height:18px;background:#777;"></div>
<div class="a" style="left:875px;top:430px;width:38px;height:18px;background:#c9c9c9;"></div>
<div class="a" style="left:875px;top:433px;width:35px;height:12px;background:#7b7b7b;"></div>
<div class="t" style="left:923.5px;top:432.24px;font-size:12px;color:#222;">No</div>
<div class="a" style="left:843px;top:466px;width:318px;height:36px;background:#f2f2f2;"></div>
<div class="t" style="left:695.5px;top:472.44px;font-size:12px;color:#222;">Sponsor Info</div>
<div class="a" style="left:865px;top:474px;width:7px;height:18px;background:#777;"></div>
<div class="a" style="left:875px;top:474px;width:38px;height:18px;background:#c9c9c9;"></div>
<div class="a" style="left:875px;top:477px;width:35px;height:12px;background:#7b7b7b;"></div>
<div class="t" style="left:923.5px;top:476.24px;font-size:12px;color:#222;">No</div>
<div class="a" style="left:843px;top:510px;width:318px;height:36px;background:#f2f2f2;"></div>
<div class="t" style="left:695.5px;top:515.94px;font-size:12px;color:#222;">Authentication Methods</div>
<div class="t" style="left:695.5px;top:527.94px;font-size:12px;color:#222;">Overview</div>
<div class="a" style="left:865px;top:518px;width:7px;height:18px;background:#777;"></div>
<div class="a" style="left:875px;top:518px;width:38px;height:18px;background:#c9c9c9;"></div>
<div class="a" style="left:875px;top:521px;width:35px;height:12px;background:#7b7b7b;"></div>
<div class="t" style="left:923.5px;top:520.24px;font-size:12px;color:#222;">No</div>
<div class="a" style="left:843px;top:554px;width:318px;height:36px;background:#f2f2f2;"></div>
<div class="t" style="left:695.5px;top:559.94px;font-size:12px;color:#222;">Authentication Methods</div>
<div class="t" style="left:695.5px;top:571.94px;font-size:12px;color:#222;">Details</div>
<div class="a" style="left:865px;top:562px;width:7px;height:18px;background:#777;"></div>
<div class="a" style="left:875px;top:562px;width:38px;height:18px;background:#c9c9c9;"></div>
<div class="a" style="left:875px;top:565px;width:35px;height:12px;background:#7b7b7b;"></div>
<div class="t" style="left:923.5px;top:564.24px;font-size:12px;color:#222;">No</div>
<div class="a" style="left:676px;top:630px;width:500px;height:1px;background:#dcdcdc;"></div>
<div class="a" style="left:676px;top:631px;width:500px;height:45px;background:#fff;"></div>
<div class="a" style="left:947px;top:635px;width:90px;height:21px;background:#e1e1e1;border:1px solid #adadad"></div>
<div class="a" style="left:1056px;top:635px;width:90px;height:21px;background:#e1e1e1;border:1px solid #adadad"></div>
<div class="t" style="left:692px;width:600px;text-align:center;top:640.44px;font-size:12px;color:#222;">OK</div>
<div class="t" style="left:801px;width:600px;text-align:center;top:640.44px;font-size:12px;color:#222;">Cancel</div>
<svg style="left:1163px;top:658px;" width="12" height="12" viewBox="0 0 12 12"><g fill="#bbb"><rect x="9" y="1" width="2" height="2"/><rect x="6" y="4" width="2" height="2"/><rect x="9" y="4" width="2" height="2"/><rect x="3" y="7" width="2" height="2"/><rect x="6" y="7" width="2" height="2"/><rect x="9" y="7" width="2" height="2"/><rect x="0" y="10" width="2" height="2"/><rect x="3" y="10" width="2" height="2"/><rect x="6" y="10" width="2" height="2"/><rect x="9" y="10" width="2" height="2"/></g></svg>
</body></html>
